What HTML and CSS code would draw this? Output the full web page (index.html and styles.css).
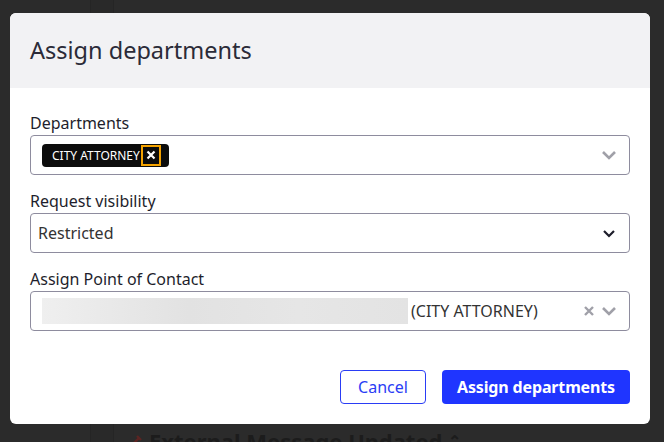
FILE: index.html
```html
<!DOCTYPE html>
<html lang="en">
<head>
    <meta charset="UTF-8">
    <meta name="viewport" content="width=device-width, initial-scale=1.0">
    <title>Assign departments</title>
    <link rel="stylesheet" href="styles.css">
</head>
<body>
    <!-- Page behind the dialog (dimmed) -->
    <div class="page">
        <div class="rail"></div>
        <div class="subrail"></div>
        <div class="content">
            <h2 class="event-title">
                <svg class="event-icon" width="14" height="14" viewBox="0 0 14 14"><path d="M3 11 L10 4 M8 2 L12 6" stroke="#5c2422" stroke-width="2.4" fill="none"/></svg>
                External Message Updated
                <span class="caret">&#8963;</span>
            </h2>
        </div>
    </div>

    <!-- Modal -->
    <div class="modal">
        <div class="modal-header">
            <h1>Assign departments</h1>
        </div>

        <div class="modal-body">
            <label class="field-label">Departments</label>
            <div class="select">
                <div class="select-value">
                    <span class="chip">
                        CITY ATTORNEY
                        <span class="chip-remove">
                            <svg width="10" height="10" viewBox="0 0 10 10"><path d="M1.5 1.5 L8.5 8.5 M8.5 1.5 L1.5 8.5" stroke="#fff" stroke-width="2.2" fill="none"/></svg>
                        </span>
                    </span>
                </div>
                <div class="select-icons">
                    <svg class="chevron" width="16" height="16" viewBox="0 0 16 16"><path d="M2 5 L8 11 L14 5" stroke="#a0a0a8" stroke-width="2.6" fill="none"/></svg>
                </div>
            </div>

            <label class="field-label">Request visibility</label>
            <div class="select">
                <div class="select-value plain">Restricted</div>
                <div class="select-icons">
                    <svg class="chevron" width="16" height="16" viewBox="0 0 16 16"><path d="M3 6 L8 11 L13 6" stroke="#1d1d2a" stroke-width="2.2" fill="none"/></svg>
                </div>
            </div>

            <label class="field-label">Assign Point of Contact</label>
            <div class="select">
                <div class="select-value plain">
                    <span class="redacted"></span>(CITY ATTORNEY)
                </div>
                <div class="select-icons">
                    <svg class="clear" width="12" height="12" viewBox="0 0 12 12"><path d="M2 2 L10 10 M10 2 L2 10" stroke="#a0a0a8" stroke-width="2.4" fill="none"/></svg>
                    <svg class="chevron" width="16" height="16" viewBox="0 0 16 16"><path d="M2 5 L8 11 L14 5" stroke="#a0a0a8" stroke-width="2.6" fill="none"/></svg>
                </div>
            </div>
        </div>

        <div class="modal-footer">
            <button class="btn btn-outline">Cancel</button>
            <button class="btn btn-primary">Assign departments</button>
        </div>
    </div>
</body>
</html>
```

FILE: styles.css
```css
body {
    margin: 0;
    padding: 0;
    font-family: "Noto Sans", "Open Sans", Arial, sans-serif;
    background-color: #2b2b2b;
    overflow: hidden;
}
.page {
    display: flex;
    height: 442px;
}
.rail {
    width: 90px;
    border-right: 1px solid #252525;
}
.subrail {
    width: 22px;
    background-color: #292929;
    border-right: 1px solid #252525;
}
.content {
    flex: 1;
    padding: 426px 0 0 15px;
}
.event-title {
    margin: 0;
    font-size: 22px;
    font-weight: 700;
    color: #1c1c1c;
    display: flex;
    align-items: center;
    gap: 6px;
}
.caret {
    font-size: 16px;
    color: #1c1c1c;
}
.modal {
    position: absolute;
    top: 13px;
    left: 10px;
    width: 640px;
    height: 411px;
    background-color: #fff;
    border-radius: 6px;
    overflow: hidden;
    display: flex;
    flex-direction: column;
}
.modal-header {
    background-color: #f2f2f4;
    height: 75px;
    display: flex;
    align-items: center;
    padding: 0 20px;
}
.modal-header h1 {
    margin: 0;
    font-size: 23.5px;
    font-weight: 400;
    color: #2b2b38;
    padding-bottom: 2px;
}
.modal-body {
    padding: 23px 20px 0;
    display: flex;
    flex-direction: column;
}
.field-label {
    display: block;
    font-size: 16px;
    line-height: 24px;
    color: #1e1e2c;
}
.select {
    height: 40px;
    box-sizing: border-box;
    border: 1px solid #8e8c9e;
    border-radius: 4px;
    display: flex;
    align-items: center;
    margin-bottom: 14px;
}
.select:last-child {
    margin-bottom: 0;
}
.select-value {
    flex: 1;
    padding-left: 11px;
    display: flex;
    align-items: center;
}
.select-value.plain {
    padding-left: 7px;
    font-size: 16px;
    color: #333;
}
.select-icons {
    display: flex;
    align-items: center;
    gap: 6px;
    padding-right: 12px;
}
.chip {
    display: inline-flex;
    align-items: center;
    height: 23px;
    background-color: #0c0c0c;
    color: #fff;
    font-size: 12px;
    border-radius: 4px;
    padding: 0 8px 0 10px;
    gap: 1px;
}
.chip-remove {
    width: 16px;
    height: 17px;
    border: 2px solid #f5a300;
    display: inline-flex;
    align-items: center;
    justify-content: center;
}
.redacted {
    width: 366px;
    height: 26px;
    margin: 0 3px 0 4px;
    background: linear-gradient(90deg, #efefef, #e2e2e2 40%, #e6e6e6 70%, #e3e3e3);
}
.modal-footer {
    margin-top: auto;
    padding: 0 20px 20px;
    display: flex;
    justify-content: flex-end;
    gap: 16px;
}
.btn {
    height: 34px;
    font-family: "Noto Sans", "Open Sans", Arial, sans-serif;
    font-size: 16px;
    border-radius: 4px;
    cursor: pointer;
}
.btn-outline {
    width: 86px;
    background-color: #fff;
    color: #2a3df5;
    border: 1px solid #2a3df5;
}
.btn-primary {
    width: 188px;
    background-color: #1f35ff;
    color: #fff;
    border: none;
    font-weight: 700;
    letter-spacing: -0.15px;
}
```
